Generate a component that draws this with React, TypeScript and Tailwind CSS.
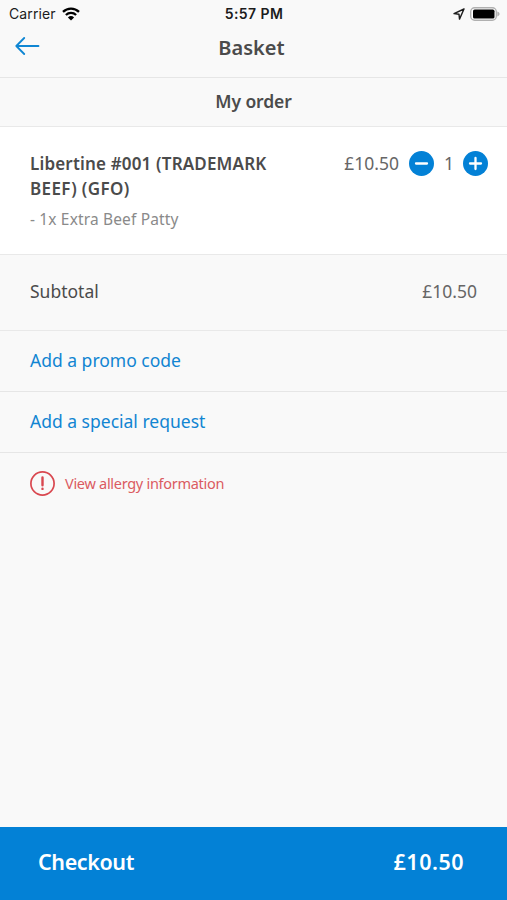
import type { ReactNode } from "react";

interface RoundButtonProps {
  label: string;
  children: ReactNode;
}

function RoundButton({ label, children }: RoundButtonProps) {
  return (
    <button
      aria-label={label}
      className="flex size-[25px] shrink-0 cursor-pointer items-center justify-center rounded-full bg-[#0381d6]"
    >
      <svg
        viewBox="0 0 25 25"
        className="size-[25px] fill-none stroke-white stroke-[2.3]"
        strokeLinecap="round"
      >
        {children}
      </svg>
    </button>
  );
}

function StatusBar() {
  return (
    <div className="grid h-[27px] grid-cols-3 items-center pl-[9px] pr-[7px] font-['Inter',sans-serif] text-[#1c1c1c]">
      <div className="flex items-center gap-[6px]">
        <span className="text-[14px] tracking-[0.1px]">Carrier</span>
        <svg viewBox="0 0 18 14" className="h-[14px] w-[18px]">
          <path
            d="M1 4.9a11.5 11.5 0 0 1 16 0M3.9 8a7.4 7.4 0 0 1 10.2 0"
            className="fill-none stroke-black stroke-[2.3]"
          />
          <path d="M9 13.6 5.9 10.5a4.5 4.5 0 0 1 6.2 0Z" className="fill-black" />
        </svg>
      </div>
      <div className="pr-px text-center text-[14px] font-semibold tracking-[0.4px]">5:57 PM</div>
      <div className="flex items-center justify-end gap-[5px]">
        <svg viewBox="0 0 12 12" className="size-3">
          <path
            d="M11 1 1 5.6l5 .6.5 4.9Z"
            className="fill-none stroke-[#1c1c1c] stroke-[1.4]"
            strokeLinejoin="round"
          />
        </svg>
        <svg viewBox="0 0 30 14" className="h-[14px] w-[30px]">
          <rect x=".7" y=".7" width="25.6" height="12.6" rx="4" className="fill-white stroke-[#b0b0b0] stroke-[1.4]" />
          <rect x="3" y="2.6" width="21.5" height="9" rx="1.6" className="fill-black" />
          <path d="M27.3 4.6c3 1 3 3.8 0 4.8Z" className="fill-[#b0b0b0]" />
        </svg>
      </div>
    </div>
  );
}

function Header() {
  return (
    <header className="h-[78px] border-b border-[#e6e6e6]">
      <StatusBar />
      <div className="grid h-[41px] grid-cols-[42px_1fr_46px] items-center">
        <button aria-label="Back" className="cursor-pointer pl-[15px]">
          <svg
            viewBox="0 0 25 18"
            className="mb-[3px] h-[18px] w-[25px] fill-none stroke-[#0f86d3] stroke-[1.8]"
            strokeLinecap="round"
            strokeLinejoin="round"
          >
            <path d="M23.5 9H1.5M9.2 1 1.3 9l7.9 8" />
          </svg>
        </button>
        <h1 className="text-center text-[20px] font-semibold">Basket</h1>
      </div>
    </header>
  );
}

export default function App() {
  return (
    <div className="flex h-[900px] w-[507px] flex-col overflow-hidden bg-[#f9f9f9] font-['Noto_Sans',sans-serif] text-[#4b4b4b]">
      <Header />

      <h2 className="flex h-[49px] items-center justify-center border-b border-[#e9e9e9] pb-0.5 text-[17.5px] font-semibold tracking-[-0.1px]">
        My order
      </h2>

      <section className="flex h-[128px] justify-between border-b border-[#e9e9e9] bg-white pl-[30px] pr-[19px] pt-6">
        <div className="w-[250px]">
          <h3 className="text-[17px] font-semibold leading-[25px]">
            <span className="block whitespace-nowrap tracking-[0.17px]">Libertine #001 (TRADEMARK</span>
            <span className="block tracking-[0.37px]">BEEF) (GFO)</span>
          </h3>
          <p className="mt-[6px] text-[15.5px] leading-6 tracking-[0.15px] text-[#8a8a8a]">- 1x Extra Beef Patty</p>
        </div>
        <div className="flex h-[25px] items-center text-[17.5px] text-[#666]">
          <span className="pb-px">£10.50</span>
          <div className="ml-[10px] flex items-center gap-[10px]">
            <RoundButton label="Remove one">
              <path d="M7 12.5h11" />
            </RoundButton>
            <span className="w-[9px] pb-px text-center">1</span>
            <RoundButton label="Add one">
              <path d="M7 12.5h11M12.5 7v11" />
            </RoundButton>
          </div>
        </div>
      </section>

      <section className="flex h-[76px] items-center justify-between border-b border-[#e9e9e9] px-[30px] pb-0.5 text-[17.5px]">
        <span>Subtotal</span>
        <span className="text-[#666]">£10.50</span>
      </section>

      <button className="flex h-[61px] cursor-pointer items-center border-b border-[#e6e6e6] px-[30px] pb-0.5 text-[17.5px] text-[#1185d2]">
        <span>Add a promo code</span>
      </button>
      <button className="flex h-[61px] cursor-pointer items-center border-b border-[#e6e6e6] px-[30px] pb-0.5 text-[17.5px] text-[#1185d2]">
        <span>Add a special request</span>
      </button>

      <button className="flex h-[61px] cursor-pointer items-center gap-[10px] px-[30px] text-[14.5px] tracking-[-0.29px] text-[#db5b61]">
        <svg viewBox="0 0 25 25" className="size-[25px] fill-none stroke-[#d9474f]">
          <circle cx="12.5" cy="12.5" r="11.6" className="stroke-[1.7]" />
          <path d="M12.5 6.5v7.8M12.5 17.8v.1" className="stroke-[2.4]" strokeLinecap="round" />
        </svg>
        <span>View allergy information</span>
      </button>

      <button className="mt-auto flex h-[73px] cursor-pointer items-center justify-between bg-[#0381d6] pb-0.5 pl-[38px] pr-[43px] text-[21.5px] font-semibold text-white">
        <span className="tracking-[-0.4px]">Checkout</span>
        <span className="tracking-[0.5px]">£10.50</span>
      </button>
    </div>
  );
}
